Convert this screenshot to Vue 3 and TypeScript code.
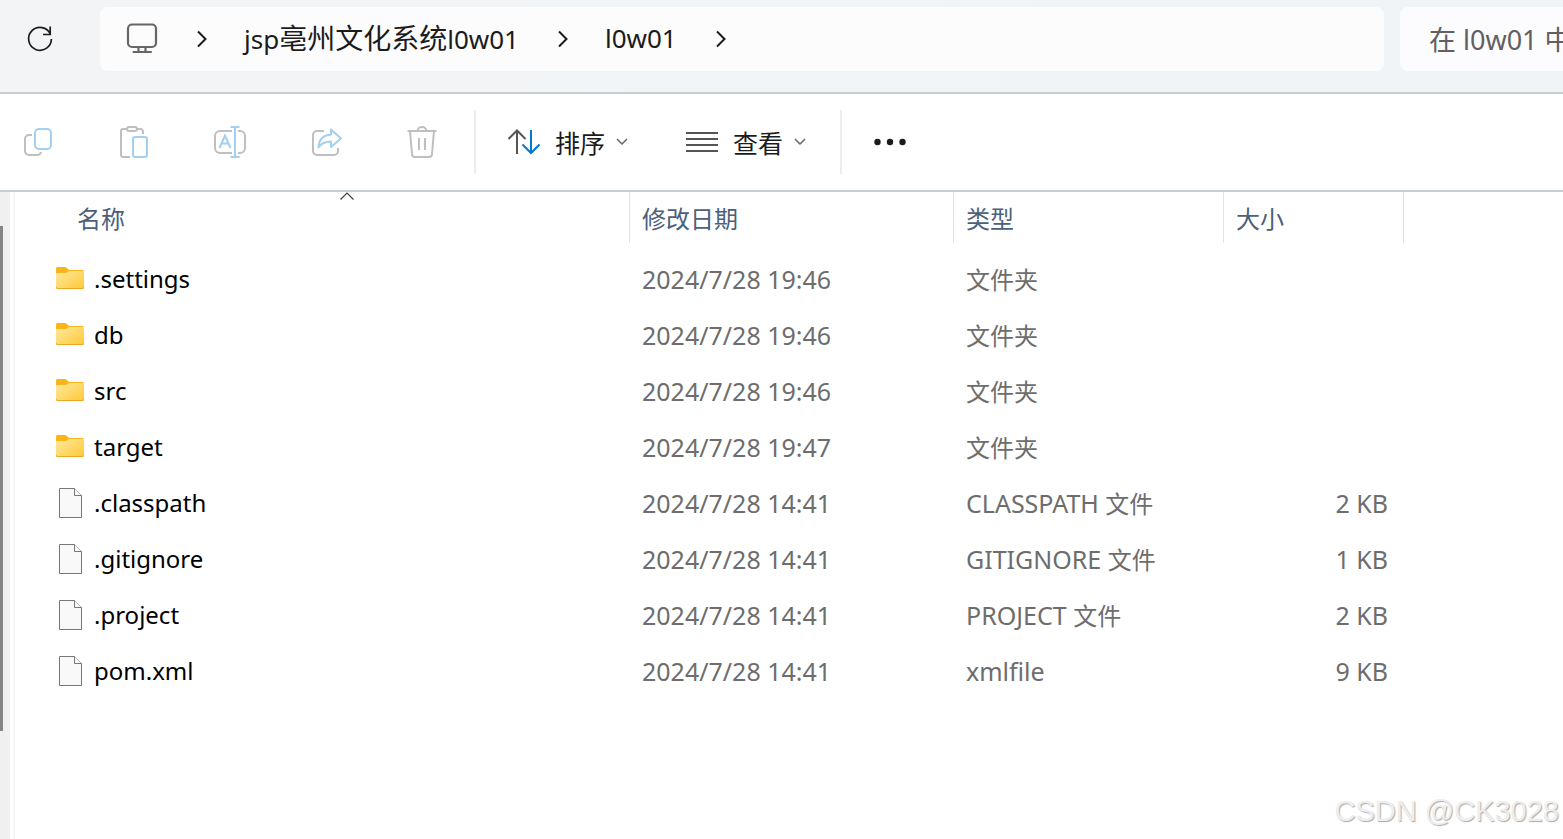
<script setup lang="ts">
interface Run {
  text: string
  cjk?: boolean
}
interface Entry {
  name: string
  folder: boolean
  modified: string
  type: Run[]
  size: string
}

const folderType: Run[] = [{ text: '文件夹', cjk: true }]
const fileType = (ext: string): Run[] => [{ text: ext + ' ' }, { text: '文件', cjk: true }]

const entries: Entry[] = [
  { name: '.settings', folder: true, modified: '2024/7/28 19:46', type: folderType, size: '' },
  { name: 'db', folder: true, modified: '2024/7/28 19:46', type: folderType, size: '' },
  { name: 'src', folder: true, modified: '2024/7/28 19:46', type: folderType, size: '' },
  { name: 'target', folder: true, modified: '2024/7/28 19:47', type: folderType, size: '' },
  { name: '.classpath', folder: false, modified: '2024/7/28 14:41', type: fileType('CLASSPATH'), size: '2 KB' },
  { name: '.gitignore', folder: false, modified: '2024/7/28 14:41', type: fileType('GITIGNORE'), size: '1 KB' },
  { name: '.project', folder: false, modified: '2024/7/28 14:41', type: fileType('PROJECT'), size: '2 KB' },
  { name: 'pom.xml', folder: false, modified: '2024/7/28 14:41', type: [{ text: 'xmlfile' }], size: '9 KB' },
]
</script>

<template>
  <div class="window">
    <header class="address-row">
      <button class="icon-button refresh" type="button" aria-label="刷新">
        <svg width="28" height="28" viewBox="0 0 28 28" fill="none" stroke="#1b1b1b" stroke-width="1.7">
          <path d="M24.4 9.2A11.4 11.4 0 1 0 25.4 14M24.2 1.5v8H17" />
        </svg>
      </button>
      <nav class="crumbs" aria-label="路径">
        <button class="icon-button" type="button" aria-label="此电脑">
          <svg width="32" height="32" viewBox="0 0 32 32" fill="none" stroke="#666" stroke-width="2.2">
            <rect x="2" y="1.5" width="28" height="22.5" rx="4" />
            <path d="M12.5 24v4.5M19.5 24v4.5M7.5 29h17.500" stroke-linecap="round" />
          </svg>
        </button>
        <svg class="sep" width="10" height="18" viewBox="0 0 10 18" fill="none" stroke="#1b1b1b" stroke-width="2"><path d="M1 1.500 8.500 9 1 16.500" /></svg>
        <a class="crumb" href="#">jsp<span class="han">亳州文化系统</span>l0w01</a>
        <svg class="sep" width="10" height="18" viewBox="0 0 10 18" fill="none" stroke="#1b1b1b" stroke-width="2"><path d="M1 1.500 8.500 9 1 16.500" /></svg>
        <a class="crumb" href="#">l0w01</a>
        <svg class="sep" width="10" height="18" viewBox="0 0 10 18" fill="none" stroke="#1b1b1b" stroke-width="2"><path d="M1 1.500 8.500 9 1 16.500" /></svg>
      </nav>
      <input class="search" type="text" placeholder="在 l0w01 中搜索" aria-label="搜索" />
    </header>

    <div class="toolbar" role="toolbar">
      <div class="actions">
        <button class="icon-button" type="button" aria-label="复制" disabled>
          <svg width="32" height="32" viewBox="0 0 32 32" fill="none" stroke-width="2">
            <path d="M10 9H7a4 4 0 0 0-4 4v12a4 4 0 0 0 4 4h8a4 4 0 0 0 4-3" stroke="#bfbfbf" />
            <rect x="13" y="3" width="16" height="20" rx="4" stroke="#a3cff1" />
          </svg>
        </button>
        <button class="icon-button" type="button" aria-label="粘贴" disabled>
          <svg width="32" height="32" viewBox="0 0 32 32" fill="none" stroke-width="2">
            <path d="M9 3H5a2 2 0 0 0-2 2v24a2 2 0 0 0 2 2h7M19 3h3a3 3 0 0 1 3 3v2" stroke="#bfbfbf" />
            <rect x="9" y="1" width="10" height="4" rx="2" stroke="#bfbfbf" />
            <rect x="15" y="11" width="14" height="20" rx="2" stroke="#a3cff1" />
          </svg>
        </button>
        <button class="icon-button" type="button" aria-label="重命名" disabled>
          <svg width="32" height="32" viewBox="0 0 32 32" fill="none" stroke-width="2">
            <path d="M18 5H6a5 5 0 0 0-5 5v12a5 5 0 0 0 5 5h12M24 5h2a5 5 0 0 1 5 5v12a5 5 0 0 1-5 5h-2" stroke="#bfbfbf" />
            <path d="M21 1v30M16.500 1h9M16.500 31h9M5.500 22 11 9.500 16.500 22M7.500 17.500h7" stroke="#a3cff1" />
          </svg>
        </button>
        <button class="icon-button" type="button" aria-label="共享" disabled>
          <svg width="32" height="32" viewBox="0 0 32 32" fill="none" stroke-width="2" stroke-linejoin="round">
            <path d="M14 5H7a4 4 0 0 0-4 4v16a4 4 0 0 0 4 4h17a4 4 0 0 0 4-4v-3" stroke="#bfbfbf" />
            <path d="M21 3.500 31 12.500 21 21v-5.500c-5.500 0-9.500 1.500-12.500 6 .5-8 5-12.500 12.500-13z" stroke="#a3cff1" />
          </svg>
        </button>
        <button class="icon-button" type="button" aria-label="删除" disabled>
          <svg width="32" height="32" viewBox="0 0 32 32" fill="none" stroke="#bfbfbf" stroke-width="2">
            <path d="M1.500 5h29M11.500 5a4.500 4 0 0 1 9 0M4 5l2 23a3 3 0 0 0 3 3h14a3 3 0 0 0 3-3l2-23M13 12v12M19 12v12" />
          </svg>
        </button>
      </div>
      <span class="divider"></span>
      <button class="menu-button" type="button">
        <svg width="32" height="32" viewBox="0 0 32 32" fill="none" stroke-width="2">
          <path d="M9 28V5M.500 13 9 4.500 17.500 13" stroke="#555" />
          <path d="M23 4v23M14.500 18.500 23 27l8.500-8.500" stroke="#0078d4" />
        </svg>
        <span>排序</span>
        <svg width="12" height="8" viewBox="0 0 12 8" fill="none" stroke="#666" stroke-width="1.500"><path d="M1 1l5 5 5-5" /></svg>
      </button>
      <button class="menu-button view" type="button">
        <svg width="32" height="32" viewBox="0 0 32 32" fill="none" stroke="#555" stroke-width="2"><path d="M0 7h32M0 13h32M0 19h32M0 25h32" /></svg>
        <span>查看</span>
        <svg width="12" height="8" viewBox="0 0 12 8" fill="none" stroke="#666" stroke-width="1.500"><path d="M1 1l5 5 5-5" /></svg>
      </button>
      <span class="divider second"></span>
      <button class="icon-button more" type="button" aria-label="更多">
        <svg width="32" height="32" viewBox="0 0 32 32" fill="#1b1b1b"><circle cx="3.500" cy="16" r="3.200" /><circle cx="16" cy="16" r="3.200" /><circle cx="28.500" cy="16" r="3.200" /></svg>
      </button>
    </div>

    <div class="body">
      <div class="scroll-track"><div class="scroll-thumb"></div></div>
      <main class="files">
        <table>
          <colgroup>
            <col class="c-name" /><col class="c-date" /><col class="c-type" /><col class="c-size" /><col />
          </colgroup>
          <thead>
            <tr>
              <th scope="col">
                <div class="head name-head">
                  名称
                  <svg class="sort-mark" width="14" height="8" viewBox="0 0 14 8" fill="none" stroke="#444" stroke-width="1.200"><path d="M.500 7.500 7 1l6.500 6.500" /></svg>
                </div>
              </th>
              <th scope="col"><div class="head">修改日期</div></th>
              <th scope="col"><div class="head">类型</div></th>
              <th scope="col"><div class="head">大小</div></th>
              <td></td>
            </tr>
          </thead>
          <tbody>
            <tr v-for="entry in entries" :key="entry.name">
              <td>
                <div class="name">
                  <svg v-if="entry.folder" width="28" height="32" viewBox="0 0 28 32">
                    <defs>
                      <linearGradient id="folder-face" x1="0" y1="0" x2="1" y2="1">
                        <stop offset="0" stop-color="#ffe8a0" />
                        <stop offset="1" stop-color="#ffc937" />
                      </linearGradient>
                    </defs>
                    <path d="M0 4.500Q0 3 1.500 3H9q1.500 0 2.500 1.500L13 6h13.500Q28 6 28 7.500V12H0z" fill="#f9b61b" />
                    <path d="M0 9.500Q0 9 1 9h8.500q1 0 2-1l1-1H28v16.500q0 1.500-1.500 1.500h-25Q0 25 0 23.500z" fill="url(#folder-face)" />
                    <path d="M0 23q0 1.500 1.500 1.500h25Q28 24.500 28 23" fill="none" stroke="#e9a820" />
                  </svg>
                  <svg v-else width="28" height="32" viewBox="0 0 28 32" fill="#f9f9f9" stroke="#777">
                    <path d="M3.500.500h15l7 7v22h-22z" /><path d="M18.500.500v7h7" />
                  </svg>
                  <span>{{ entry.name }}</span>
                </div>
              </td>
              <td>{{ entry.modified }}</td>
              <td><span v-for="run in entry.type" :key="run.text" :class="{ han: run.cjk }">{{ run.text }}</span></td>
              <td class="size">{{ entry.size }}</td>
              <td></td>
            </tr>
          </tbody>
        </table>
      </main>
      <span class="watermark">CSDN @CK3028</span>
    </div>
  </div>
</template>

<style>
body {
  margin: 0;
  background: #fff;
}
</style>

<style scoped>
.window {
  display: flex;
  flex-direction: column;
  min-height: 100vh;
  overflow: hidden;
  background: #fff;
  color: #1b1b1b;
  font-family: "Noto Sans", "Noto Sans CJK SC", sans-serif;
  font-size: 24px;
}
button {
  border: 0;
  padding: 0;
  background: none;
  color: inherit;
  font: inherit;
}
svg {
  display: block;
  flex: none;
}
.address-row {
  display: flex;
  align-items: center;
  height: 64px;
  padding: 7px 0 21px;
  border-bottom: 2px solid #c8cfd4;
  background: linear-gradient(90deg, #f3f4f6, #f0f4f7);
}
.refresh {
  margin: 0 46px 0 26px;
}
.crumbs {
  display: flex;
  flex: 1;
  align-items: center;
  height: 64px;
  margin-right: 16px;
  padding-left: 26px;
  border-radius: 8px;
  background: #fcfcfd;
  font-size: 26px;
}
.crumb {
  padding-bottom: 2px;
  color: inherit;
  line-height: 40px;
  text-decoration: none;
  white-space: nowrap;
}
.crumb .han {
  font-size: 28px;
}
.sep {
  margin: 0 37px 0 39px;
}
.search {
  box-sizing: border-box;
  width: 163px;
  height: 64px;
  padding: 0 0 0 29px;
  border: 0;
  border-radius: 8px 0 0 8px;
  background: #fcfcfe;
  color: #1b1b1b;
  font: inherit;
  font-size: 27px;
}
.search::placeholder {
  color: #606060;
  opacity: 1;
}
.toolbar {
  display: flex;
  align-items: center;
  height: 96px;
  padding-left: 22px;
  border-bottom: 2px solid #c8cfd4;
}
.actions {
  display: flex;
  gap: 64px;
}
.divider {
  width: 2px;
  height: 64px;
  margin: 0 32px 0 36px;
  background: #ededed;
}
.divider.second {
  margin-left: 34px;
}
.menu-button {
  display: flex;
  align-items: center;
  line-height: 36px;
}
.menu-button span {
  margin: 0 11px 0 15px;
  padding-top: 2px;
  font-size: 25px;
}
.menu-button.view {
  margin-left: 58px;
}
.body {
  position: relative;
  display: flex;
  flex: 1;
}
.scroll-track {
  width: 10px;
  background: #f0f0f0;
}
.scroll-thumb {
  width: 3px;
  height: 78%;
  margin-top: 34px;
  background: #858585;
}
.files {
  flex: 1;
  margin-left: 3px;
  border-left: 2px solid #f6f6f6;
}
table {
  width: 100%;
  border-collapse: collapse;
  table-layout: fixed;
}
.c-name {
  width: 615px;
}
.c-date {
  width: 324px;
}
.c-type {
  width: 270px;
}
.c-size {
  width: 180px;
}
th,
td {
  padding: 0;
  font-weight: 400;
  text-align: left;
  white-space: nowrap;
}
th {
  height: 60px;
  vertical-align: top;
}
.head {
  position: relative;
  height: 51px;
  padding-left: 12px;
  border-right: 1px solid #e2e2e2;
  color: #4c607a;
  line-height: 54px;
}
.name-head {
  padding-left: 62px;
}
.sort-mark {
  position: absolute;
  top: 0;
  left: 54%;
  transform: translateX(-50%);
}
tbody td {
  height: 54px;
  padding: 0 0 2px 12px;
  color: #6d6d6d;
  font-size: 25px;
  line-height: 36px;
}
tbody td .han {
  font-size: 24px;
}
.name {
  display: flex;
  align-items: center;
  gap: 10px;
  padding-left: 29px;
  color: #000;
  font-size: 24px;
}
.name svg {
  margin-top: 2px;
}
tbody td.size {
  padding-right: 16px;
  text-align: right;
}
.watermark {
  position: absolute;
  right: 4px;
  bottom: 11px;
  color: #eee;
  font: 29px/34px "Liberation Sans", sans-serif;
  text-shadow: 1px 1px 1px #aaa;
}
</style>
